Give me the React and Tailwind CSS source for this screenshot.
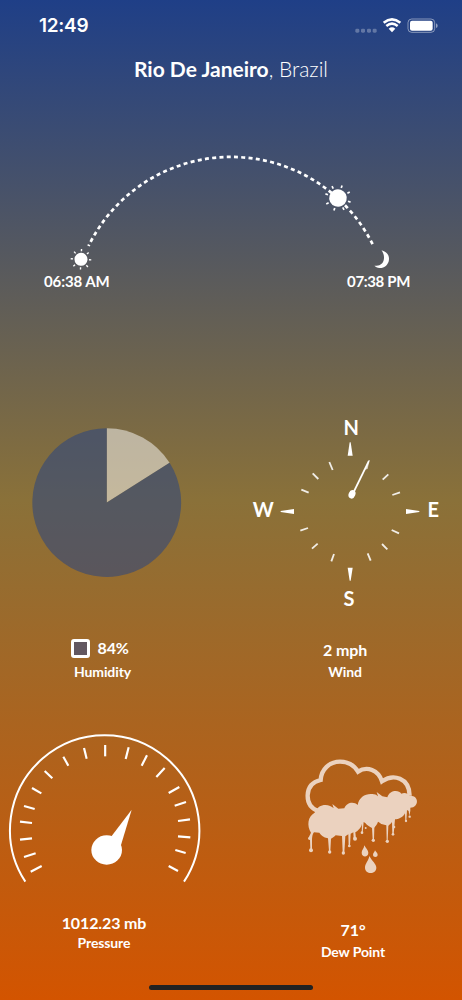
const STATS = 'text-center font-bold tracking-[-0.12px] text-white';

const COMPASS_TICKS = [
  [253, 156, 263, 180],
  [203, 190, 220, 207],
  [169, 239, 191, 248],
  [166, 362, 189, 354],
  [201, 416, 218, 401],
  [259, 454, 267, 432],
  [377, 452, 368, 430],
  [427, 418, 411, 402],
  [462, 370, 440, 360],
  [465, 247, 442, 255],
  [430, 193, 413, 209],
];

const GAUGE_TICKS = [
  [92, 440, 125, 423],
  [72, 396, 107, 385],
  [60, 344, 96, 340],
  [60, 290, 96, 294],
  [72, 243, 104, 252],
  [96, 189, 124, 205],
  [134, 138, 157, 160],
  [190, 95, 205, 122],
  [252, 69, 260, 101],
  [315.5, 60, 315.5, 94],
  [386, 67, 377, 102],
  [441, 91, 425, 122],
  [494, 129, 469, 156],
  [538, 186, 506, 204],
  [558, 231, 524, 242],
  [570, 283, 534, 288],
  [571, 337, 534, 334],
  [557, 384, 526, 375],
  [534, 438, 506, 423],
];

const RAYS = [0, 45, 90, 135, 180, 225, 270, 315];

function Sun({ cx, cy, r, inner, outer, tilt = 0, width = 5 }) {
  return (
    <g transform={`translate(${cx} ${cy}) rotate(${tilt})`} stroke="white" strokeWidth={width}>
      <circle r={r} fill="white" stroke="none" />
      {RAYS.map(a => (
        <line key={a} x1={inner} y1="0" x2={outer} y2="0" transform={`rotate(${a})`} />
      ))}
    </g>
  );
}

function StatusBar() {
  return (
    <div className="flex h-[50px] items-center justify-between pl-[39px] pr-6 pt-[1px] text-white">
      <span className="font-['Inter',sans-serif] text-[19px] font-semibold leading-5 tracking-[-0.3px]">12:49</span>
      <svg className="h-[18px] w-[84px]" viewBox="0 0 252 54" fill="none">
        {/* signal */}
        <g fill="white" opacity="0.28">
          <rect x="4" y="35" width="12" height="12" rx="4" />
          <rect x="21" y="35" width="12" height="12" rx="4" />
          <rect x="39" y="35" width="12" height="12" rx="4" />
          <rect x="56" y="35" width="12" height="12" rx="4" />
        </g>
        {/* wifi */}
        <path d="M89 17 Q114 -3 139 17" stroke="white" strokeWidth="8" />
        <path d="M97 27 Q114 13 131 27" stroke="white" strokeWidth="7.5" />
        <path d="M104 35 Q114 27 124 35 L114 46 Z" fill="white" />
        {/* battery */}
        <rect x="162" y="6" width="80" height="40" rx="11" stroke="white" strokeOpacity="0.45" strokeWidth="3" />
        <rect x="168" y="11.5" width="68" height="29.5" rx="6" fill="white" />
        <path d="M246 19 Q251 21 251 26 Q251 31 246 33 Z" fill="white" fillOpacity="0.5" />
      </svg>
    </div>
  );
}

function DayArc() {
  return (
    <div className="mt-[57px]">
      <svg className="block h-[130px] w-[462px]" viewBox="0 0 462 130">
        <path
          d="M88.5 106 A158.5 158.5 0 0 1 373.5 106"
          fill="none"
          stroke="white"
          strokeWidth="2.7"
          strokeDasharray="4 3.3"
          strokeDashoffset="2.5"
        />
        <Sun cx={338} cy={58} r={8.8} inner={10.5} outer={13.2} tilt={18} width={1.7} />
        <Sun cx={81} cy={119.3} r={6.5} inner={8} outer={10.3} tilt={3} width={1.4} />
        <path
          d="M381.5 110.3 C386.5 111.5 389.2 115 389 119.2 C388.8 124.5 384.5 128.2 379.5 128.1 C377.3 128 375.4 127 374.4 125.8 C379 126 382.5 124.5 383.6 120.5 C384.7 116.5 383.5 113 381.5 110.3 Z"
          fill="white"
        />
      </svg>
      <div className="mt-[1px] flex justify-between pl-11 pr-[52px] text-[15px] font-bold leading-5 text-white">
        <span className="tracking-[-0.1px]">06:38 AM</span>
        <span className="tracking-[-0.35px]">07:38 PM</span>
      </div>
    </div>
  );
}

function Humidity() {
  return (
    <div>
      <svg className="ml-5 block h-[210px] w-[180px]" viewBox="0 0 180 210">
        <path d="M86.8 92.6 L86.8 18.2 A74.4 74.4 0 0 1 149.6 52.8 Z" fill="white" fillOpacity="0.5" />
        <path d="M86.8 92.6 L149.6 52.8 A74.4 74.4 0 1 1 86.8 18.2 Z" fill="#1f3f87" fillOpacity="0.5" />
      </svg>
      <div className={`${STATS} mt-[18px] w-[205px]`}>
        <div className="flex h-5 items-center gap-2 pl-[70.5px] text-base leading-5">
          <span className="h-[19px] w-[19px] rounded-[3px] border-[3px] border-white bg-[#625760]" />
          <span>84%</span>
        </div>
        <p className="mt-1 text-sm leading-5">Humidity</p>
      </div>
    </div>
  );
}

function Wind() {
  return (
    <div>
      <svg className="ml-[14px] block h-[210px] w-[205px]" viewBox="0 0 615 630" fill="white">
        <g fontFamily="Lato, sans-serif" fontSize="60" fontWeight="700" textAnchor="middle">
          <text x="319" y="74">N</text>
          <text x="565" y="320">E</text>
          <text x="312" y="588">S</text>
          <text x="55" y="320">W</text>
        </g>
        <path d="M314 97 H317 L323 137 H308 Z" />
        <path d="M314 512 H317 L323 473 H308 Z" />
        <path d="M107 303 V306 L147 312 V297 Z" />
        <path d="M523 303 V306 L483 312 V297 Z" />
        <g stroke="white" strokeWidth="5.5" opacity="0.88">
          {COMPASS_TICKS.map(([x1, y1, x2, y2]) => (
            <line key={`${x1}-${y1}`} x1={x1} y1={y1} x2={x2} y2={y2} />
          ))}
        </g>
        {/* needle */}
        <path d="M323 246 L369 152 L374 150 L373 156 L328 248 Z" />
        <path d="M373 154 L368 176 L361 179 L362 171 Z" opacity="0.7" />
        <ellipse cx="321" cy="253" rx="10" ry="13" transform="rotate(22 321 253)" />
      </svg>
      <div className={`${STATS} mt-5 w-[228px]`}>
        <p className="text-base leading-5">2 mph</p>
        <p className="mt-0.5 text-sm leading-5">Wind</p>
      </div>
    </div>
  );
}

function Pressure() {
  return (
    <div>
      <svg className="block h-[165px] w-[210px]" viewBox="0 0 630 495" fill="none" stroke="white">
        <path d="M76 470 A284 284 0 1 1 552 470" strokeWidth="6" />
        <g strokeWidth="6.5">
          {GAUGE_TICKS.map(([x1, y1, x2, y2]) => (
            <line key={`${x1}-${y1}`} x1={x1} y1={y1} x2={x2} y2={y2} />
          ))}
        </g>
        <g fill="white" stroke="none">
          <ellipse cx="320" cy="375" rx="46" ry="44" />
          <path d="M395 254 L335 333 L350 365 L363 360 Z" />
        </g>
      </svg>
      <div className={`${STATS} mt-[23px] w-[208px]`}>
        <p className="text-base leading-5">1012.23 mb</p>
        <p className="text-sm leading-5">Pressure</p>
      </div>
    </div>
  );
}

function DewPoint() {
  return (
    <div className="pt-5">
      <svg className="ml-[59px] block h-[140px] w-[140px]" viewBox="0 0 420 420" fill="#ebd2bf">
        <path
          d="M84 198 C62 190 52 174 53 150 C54 125 70 110 92 105 C94 73 118 50 150 50 C174 50 193 62 204 80 C231 62 265 75 276 109 C310 85 358 98 359 152"
          fill="none"
          stroke="#ebd2bf"
          strokeWidth="13"
        />
        <path d="M74 203 C84 174 118 175 131 190 L127 177 L145 191 L163 190 C169 172 192 168 203 180 C207 155 230 143 252 148 C258 149 261 152 264 154 L260 141 L277 154 L292 157 C299 135 326 134 334 146 C344 142 354 145 359 152 C388 150 388 187 361 188 L361 197 L358 213 L356 198 L351 195 L349 227 L346 227 L345 205 C339 218 325 223 315 223 L311 268 L307 268 L306 231 C303 237 297 239 295 243 L293 287 L290 287 L289 241 L274 237 C270 234 265 230 264 230 C262 239 254 244 253 249 L252 285 L248 285 L246 249 C237 244 229 239 226 234 L221 231 L218 264 L215 264 L216 236 C213 250 202 258 196 262 L198 281 L191 281 L190 262 L182 266 L180 302 L176 302 L175 268 L166 274 L163 322 L158 322 L156 273 L137 271 C132 277 125 280 123 281 L121 318 L117 318 L114 280 C100 277 91 269 88 263 L72 262 C67 268 67 275 66 283 L66 314 L61 314 L60 282 L57 275 L63 263 C50 242 53 214 74 203 Z" />
        <g>
          <circle cx="63" cy="316" r="6" />
          <circle cx="59" cy="280" r="5" />
          <circle cx="119" cy="321" r="5" />
          <circle cx="160" cy="324" r="5" />
          <circle cx="178" cy="303" r="4" />
          <circle cx="195" cy="281" r="6" />
          <circle cx="216" cy="263" r="4" />
          <circle cx="227" cy="249" r="3" />
          <circle cx="250" cy="286" r="5" />
          <circle cx="292" cy="289" r="5" />
          <circle cx="309" cy="268" r="4" />
          <circle cx="312" cy="246" r="4" />
          <circle cx="348" cy="228" r="3.5" />
          <circle cx="359" cy="215" r="3.5" />
        </g>
        {/* falling drops */}
        <path d="M223 301 C228 311 235 316 235 323 C235 338 215 338 215 323 C215 315 222 311 223 301 Z" />
        <path d="M255 316 C258 322 263 324 263 329 C263 338 249 338 249 329 C249 324 254 321 255 316 Z" />
        <path d="M238 333 C246 348 259 357 259 368 C259 389 225 389 225 368 C225 356 236 347 238 333 Z" />
      </svg>
      <div className={`${STATS} mt-[35px] w-[244px]`}>
        <p className="text-base leading-5">71°</p>
        <p className="mt-0.5 text-sm leading-5">Dew Point</p>
      </div>
    </div>
  );
}

export default function App() {
  return (
    <main className="flex h-[1000px] w-[462px] flex-col overflow-hidden bg-[linear-gradient(to_bottom,#1f3f87,#8a7139_50%,#d35400)] font-['Lato',sans-serif]">
      <StatusBar />
      <h1 className="mt-[5px] text-center text-[21px] font-light leading-7 text-white">
        <span className="font-bold">Rio De Janeiro</span>, Brazil
      </h1>
      <div className="h-[267px]">
        <DayArc />
      </div>
      <div className="mt-[60px] grid grid-cols-2">
        <div className="h-[315px]"><Humidity /></div>
        <div className="h-[315px]"><Wind /></div>
        <div className="h-[260px]"><Pressure /></div>
        <div className="h-[260px]"><DewPoint /></div>
      </div>
      <div className="ml-[149px] h-[5px] w-[164px] shrink-0 rounded-full bg-[#222]" />
    </main>
  );
}
